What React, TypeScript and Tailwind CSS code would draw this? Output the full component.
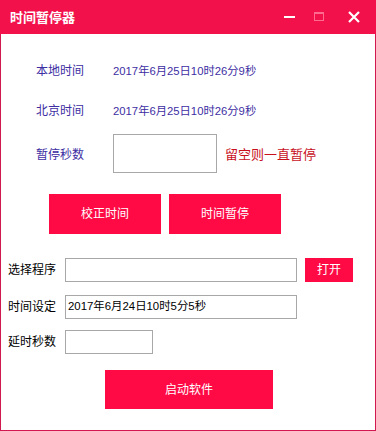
import React from 'react';

const FONT = { fontFamily: '"Liberation Sans", "Noto Sans CJK SC", sans-serif' };

const App: React.FC = () => {
  return (
    <div className="w-[376px] h-[431px] flex flex-col bg-white" style={FONT}>
      {/* title bar */}
      <div className="h-[34px] bg-[#f2114b] flex items-center text-white shrink-0">
        <span className="pl-[10px] text-[13px] font-bold leading-none">时间暂停器</span>
        <div className="ml-auto flex items-center">
          <div className="w-[11px] h-[2px] bg-white mr-[19px]" />
          <div className="w-[10px] h-[9px] border border-[#ff6a8e] border-t-2 mr-[24px] mb-[2px]" />
          <svg width="12" height="12" viewBox="0 0 12 12" className="mr-[16px]">
            <path d="M1 1 L11 11 M11 1 L1 11" stroke="white" strokeWidth="2.2" />
          </svg>
        </div>
      </div>

      {/* body */}
      <div className="flex-1 flex flex-col border-x border-b border-[#d0194f] text-[12px]">
        <div className="mt-[27px] h-[20px] flex items-center pl-[35px] text-[#3d2ea3]">
          <span className="w-[77px]">本地时间</span>
          <span className="text-[11.3px]">2017年6月25日10时26分9秒</span>
        </div>
        <div className="mt-[20px] h-[20px] flex items-center pl-[35px] text-[#3d2ea3]">
          <span className="w-[77px]">北京时间</span>
          <span className="text-[11.3px]">2017年6月25日10时26分9秒</span>
        </div>
        <div className="mt-[13px] h-[39px] flex items-center pl-[35px]">
          <span className="w-[77px] text-[#3d2ea3] pt-[2px]">暂停秒数</span>
          <div className="w-[104px] h-[39px] border border-[#a8a8a8]" />
          <span className="ml-[8px] text-[13px] text-[#c8101e] pt-[2px]">留空则一直暂停</span>
        </div>
        <div className="mt-[21px] flex pl-[48px] gap-[8px]">
          <button className="w-[112px] h-[40px] bg-[#ff0a45] text-white text-[12px]">校正时间</button>
          <button className="w-[112px] h-[40px] bg-[#ff0a45] text-white text-[12px]">时间暂停</button>
        </div>

        <div className="mt-[24px] h-[24px] flex items-center pl-[7px]">
          <span className="w-[57px] text-black">选择程序</span>
          <div className="w-[232px] h-[24px] border border-[#a8a8a8]" />
          <button className="ml-[8px] w-[48px] h-[24px] bg-[#ff0a45] text-white text-[12px]">打开</button>
        </div>
        <div className="mt-[13px] h-[24px] flex items-center pl-[7px]">
          <span className="w-[57px] text-black">时间设定</span>
          <div className="w-[232px] h-[24px] border border-[#a8a8a8] flex items-center pl-[2px] text-black text-[11.4px]">
            2017年6月24日10时5分5秒
          </div>
        </div>
        <div className="mt-[11px] h-[24px] flex items-center pl-[7px]">
          <span className="w-[57px] text-black">延时秒数</span>
          <div className="w-[88px] h-[24px] border border-[#a8a8a8]" />
        </div>
        <div className="mt-[16px] pl-[104px]">
          <button className="w-[168px] h-[39px] bg-[#ff0a45] text-white text-[12px]">启动软件</button>
        </div>
      </div>
    </div>
  );
};

export default App;
